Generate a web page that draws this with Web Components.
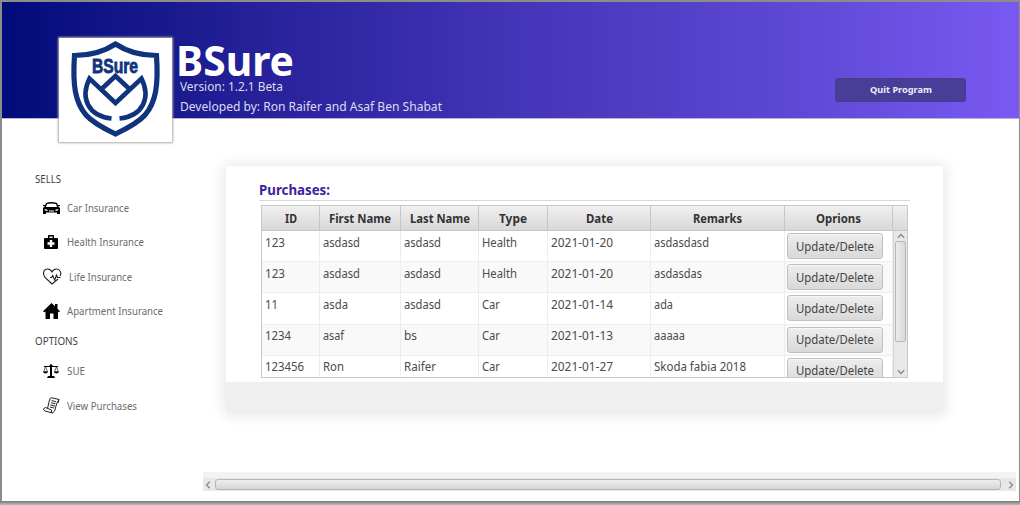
<!DOCTYPE html>
<html lang="en"><head><meta charset="utf-8"><title>BSure</title>
<style>html,body{margin:0;width:1020px;height:505px;overflow:hidden;background:#999;font-family:"Noto Sans","Open Sans",sans-serif}</style></head>
<body><bs-app></bs-app>
<script>
const define=(name,html,setup)=>customElements.define(name,class extends HTMLElement{
  constructor(){super();this.attachShadow({mode:'open'});}
  connectedCallback(){this.shadowRoot.innerHTML=typeof html==='function'?html(this):html;if(setup)setup(this);}
});

/* Label condensed or expanded to the width in its w attribute */
define('fit-label','<style>:host{display:inline-block;white-space:nowrap;flex:none}span{display:inline-block;transform-origin:0 50%}</style><span><slot></slot></span>',el=>{
  const s=el.shadowRoot.querySelector('span'),w=+el.getAttribute('w');
  const n=s.getBoundingClientRect().width;
  el.style.width=w+'px';
  if(n)s.style.transform=`scaleX(${w/n})`;
});

define('bs-logo',`<style>:host{display:block;width:113px;height:104px;background:#fff;box-shadow:0 0 2px 1px #aaa;flex:none}svg{display:block}text{font:700 20px "Liberation Sans",sans-serif}</style>
<svg width="113" height="104" viewBox="0 0 113 104"><g fill="none" stroke="#0f347d" stroke-width="5.200">
<path d="M56.500 6C46 13 31 17.500 15.500 17.500C13.500 47 16 64 27 77C34 85 46 91 56.500 96C67 91 79 85 86 77C97 64 99.500 47 97.500 17.500C82 17.500 67 13 56.500 6Z"/>
<path d="M52.500 80.500C29 78 21 60 30.500 40.500L56.500 65L82.500 40.500C92 60 84 78 60.500 80.500" stroke-width="4.600"/>
<path d="M41.500 52L56.500 38L71.500 52" stroke-width="4.600"/></g>
<text x="33" y="34.500" textLength="46" lengthAdjust="spacingAndGlyphs" fill="#0f347d" stroke="#0f347d" stroke-width=".8">BSure</text></svg>`);

define('bs-header',`<style>
:host{display:flex;height:117px;width:1017px;box-sizing:border-box;padding:36px 53px 0 57px;background:linear-gradient(90deg,#010b79 0,#262199 25%,#4434b7 50%,#5c47d2 76%,#7959f2 100%);border-bottom:1px solid #b9b3dc;color:#fff}
.info{display:flex;flex-direction:column;padding-left:4px;flex:1}
h1{margin:0;height:40px;font:700 42px/44px "Noto Sans",sans-serif}
h1 fit-label{line-height:44px}
.v{height:20px;font-size:12.500px;line-height:18px;padding-left:4px;color:#dddcef}
button{font:700 9.500px/24px "Noto Sans",sans-serif;width:131px;height:24px;padding:0;margin-top:40px;border:1px solid #4a3b8d;border-radius:3px;background:#493e97;color:#eeecfa;line-height:22px}
</style><bs-logo></bs-logo><div class="info"><h1><fit-label w="118">BSure</fit-label></h1><div class="v"><fit-label w="103">Version: 1.2.1 Beta</fit-label></div><div class="v"><fit-label w="262">Developed by: Ron Raifer and Asaf Ben Shabat</fit-label></div></div><button><fit-label w="62">Quit Program</fit-label></button>`);

const icons={
car:'<path fill-rule="evenodd" d="M3 3Q8.500 1 14 3L15.500 6.500L17 8V14H14V12.500H3V14H0V8L1.500 6.500ZM4 4L3 7H14L13 4Q8.500 3 4 4ZM1.500 9L2 10.500L5 11L4 9.500ZM15.500 9L15 10.500L12 11L13 9.500ZM6 10.500V11.500H11V10.500Z"/><path d="M0 5h2v1H0zM15 5h2v1h-2z"/>',
health:'<path fill-rule="evenodd" d="M5 4V1.500Q5 1 6 1H10Q11 1 11 1.500V4H14Q15 4 15 5V14Q15 15 14 15H2Q1 15 1 14V5Q1 4 2 4ZM6.500 2.500V4H9.500V2.500ZM6.800 6V8.300H4.500V10.700H6.800V13H9.200V10.700H11.500V8.300H9.200V6Z"/>',
life:'<path fill="none" stroke="#222" stroke-width="1.100" d="M9 16L2 9.500C-1 5 1 1 4.500 1Q7.500 1 9 4Q10.500 1 13.500 1C17 1 19 5 17 8M9 16L15 11M7 9.500h1.500l1.200-2 2 4.500 1.800-5 1 2.500h3"/>',
home:'<path d="M8.500 0L12 3.300V1H14.500V5.700L17 8.300L16 9.300L15 8.500V16H10.500V10.500H7V16H2.500V8.500L1.200 9.300L0 8.300Z"/>',
scale:'<path d="M7 2Q8 0 9 2L10 3H15V4H9V13H11L12 15H4L5 13H7V4H1V3H6Z"/><path fill="none" stroke="#000" stroke-width=".6" d="M2.500 3.500L.7 9H4.500ZM13.500 3.500L11.500 9H15.300Z"/><path d="M0 8.500H5Q4.500 10.500 2.500 10.500Q.5 10.500 0 8.500M11 8.500H16Q15.500 10.500 13.500 10.500Q11.500 10.500 11 8.500"/>',
paper:'<g fill="none" stroke="#222" stroke-width="1"><path d="M4.500 11.500L6.500 3Q7 .5 9 .8L16 2.500Q14 5 13 9Q12 15.500 9.500 16L2 14Q0 13 .8 11.500L2.500 10.500L8.500 13Q8 15.500 9.500 16M16 2.500L15 6"/><path d="M8.500 3.500L13 4.800M8 5.700L12.500 6.900M7.400 7.900L12 9.100M7 10L11 11"/></g>'};
define('menu-item',el=>`<style>:host{display:flex;height:34.300px;align-items:center;padding-left:8px;font-size:10.300px;line-height:16px;color:#6b6b6b}svg{width:${el.getAttribute('icon')==='life'?19:17}px;height:17px;margin-right:7px;flex:none}</style><svg viewBox="0 0 ${el.getAttribute('icon')==='life'?19:17} 17">${icons[el.getAttribute('icon')]}</svg><fit-label w="${el.getAttribute('w')}">${el.getAttribute('label')}</fit-label>`);

define('side-menu',`<style>:host{display:block;width:168px;padding:52px 0 0 33px;color:#444;font-size:10.300px}
.h{height:18px;line-height:16px}.h+menu-item{margin-top:2px}.h2{margin-top:5px;height:17px}.h2+menu-item{margin-top:4px}menu-item{margin-left:-.5px}</style>
<div class="h"><fit-label w="26">SELLS</fit-label></div>
<menu-item icon="car" label="Car Insurance" w="62"></menu-item><menu-item icon="health" label="Health Insurance" w="77"></menu-item><menu-item icon="life" label="Life Insurance" w="63"></menu-item><menu-item icon="home" label="Apartment Insurance" w="96"></menu-item>
<div class="h h2"><fit-label w="43">OPTIONS</fit-label></div>
<menu-item icon="scale" label="SUE" w="18"></menu-item><menu-item icon="paper" label="View Purchases" w="70"></menu-item>`);

define('scroll-arrow',el=>`<style>:host{display:block;width:8px;height:8px;flex:none}svg{display:block;transform:rotate(${el.getAttribute('turn')}deg)}</style><svg width="8" height="8"><path d="M.8 5.800L4 2.500L7.200 5.800" fill="none" stroke="#8c8c8c" stroke-width="1.400"/></svg>`);

const heads=[['ID',12],['First Name',62],['Last Name',60],['Type',28],['Date',27],['Remarks',49],['Oprions',45],['',0]];
const rows=[
[['123',20],['asdasd',37],['asdasd',37],['Health',35],['2021-01-20',62],['asdasdasd',55]],
[['123',20],['asdasd',37],['asdasd',37],['Health',35],['2021-01-20',62],['asdasdas',48]],
[['11',13],['asda',25],['asdasd',37],['Car',18],['2021-01-14',62],['ada',19]],
[['1234',26],['asaf',21],['bs',13],['Car',18],['2021-01-13',62],['aaaaa',31]],
[['123456',39],['Ron',21],['Raifer',32],['Car',18],['2021-01-27',62],['Skoda fabia 2018',92]]];
define('purchase-table',()=>`<style>
:host{display:block;box-sizing:border-box;width:647px;height:173px;border:1px solid #c8c8c8;overflow:hidden;color:#4b4b4b;font-size:12px}
.g{display:grid;grid-template-columns:58px 81px 78px 69px 103px 134px 108px 14px}
.g>div{box-sizing:border-box;border-right:1px solid #ededed;white-space:nowrap}
.head{height:25px;background:linear-gradient(#f0f0f0,#d8d8d8);border-bottom:1px solid #c6c6c6;box-sizing:border-box;font-weight:700;color:#333;font-size:11.800px;line-height:24px;text-align:center}
.head>div{border-right-color:#c6c6c6}.head>div:last-child{border-right:0}
.body{display:flex;height:146px}.rows{width:631px;overflow:hidden}.rows .g{grid-template-columns:58px 81px 78px 69px 103px 134px 108px;height:31.200px;box-sizing:border-box;border-bottom:1px solid #ededed}
.rows .g:nth-child(even){background:#f9f9f9}.rows .g>div{padding:2.500px 0 0 2.700px;line-height:18px}
.rows .g>div:last-child{padding:2px 0 0 2px}
button{width:96px;height:26px;box-sizing:border-box;padding:0;border:1px solid #c0c0c0;border-radius:3px;background:linear-gradient(#ededed,#d9d9d9);box-shadow:inset 0 1px #f6f6f6;color:#444;font:12px/23px "Noto Sans",sans-serif;display:block}
.bar{width:14px;background:#e8e8e8;border-left:1px solid #d4d4d4;box-sizing:border-box;display:flex;flex-direction:column;align-items:center;padding:1px 0}
.thumb{width:11px;height:101px;box-sizing:border-box;margin:1px 0 auto;border:1px solid #b8b8b8;border-radius:2px;background:linear-gradient(90deg,#ececec,#d9d9d9)}
</style><div class="g head">${heads.map(([t,w])=>`<div>${t?`<fit-label w="${w}">${t}</fit-label>`:''}</div>`).join('')}</div>
<div class="body"><div class="rows">${rows.map(r=>`<div class="g">${r.map(([t,w])=>`<div><fit-label w="${w}">${t}</fit-label></div>`).join('')}<div><button><fit-label w="78">Update/Delete</fit-label></button></div></div>`).join('')}</div>
<div class="bar"><scroll-arrow turn="0"></scroll-arrow><div class="thumb"></div><scroll-arrow turn="180"></scroll-arrow></div></div>`);

define('purchase-card',`<style>:host{display:block;box-sizing:border-box;width:717px;height:246px;background:#fff;border-bottom:30px solid #efefef;box-shadow:0 1px 13px 2px rgba(70,35,45,.13);padding:14px 33px 0;border-radius:0 0 4px 4px}
h2{margin:0;box-sizing:border-box;height:21px;color:#4021a2;font:700 13.700px/20px "Noto Sans",sans-serif;border-bottom:1px solid #d8d8d8}purchase-table{margin:4px 0 0 2px}</style>
<h2><fit-label w="71">Purchases:</fit-label></h2><purchase-table></purchase-table>`);

define('horizontal-bar',`<style>:host{display:flex;box-sizing:border-box;width:813px;height:19px;border-top:6px solid #f2f2f2;background:#e8e8e8;align-items:center;padding:0 1px}
.t{flex:1;height:11px;box-sizing:border-box;border:1px solid #b6b6b6;border-radius:3px;background:linear-gradient(#ededed,#d6d6d6);margin:0 6px 0 3px}</style><scroll-arrow turn="-90"></scroll-arrow><div class="t"></div><scroll-arrow turn="90"></scroll-arrow>`);

define('bs-app',`<style>:host{display:block;box-sizing:border-box;width:1020px;height:505px;padding:2px 1px 4px 2px;background:linear-gradient(#8c8c8c 0,#8c8c8c 501px,#777 501px,#bcbcbc 505px)}
.window{height:499px;background:#fff}.content{display:flex;height:382px}main{display:flex;flex-direction:column;width:813px}purchase-card{margin:47px 0 60px 23px;flex:none}</style>
<div class="window"><bs-header></bs-header><div class="content"><side-menu></side-menu><main><purchase-card></purchase-card><horizontal-bar></horizontal-bar></main></div></div>`);
</script></body></html>
